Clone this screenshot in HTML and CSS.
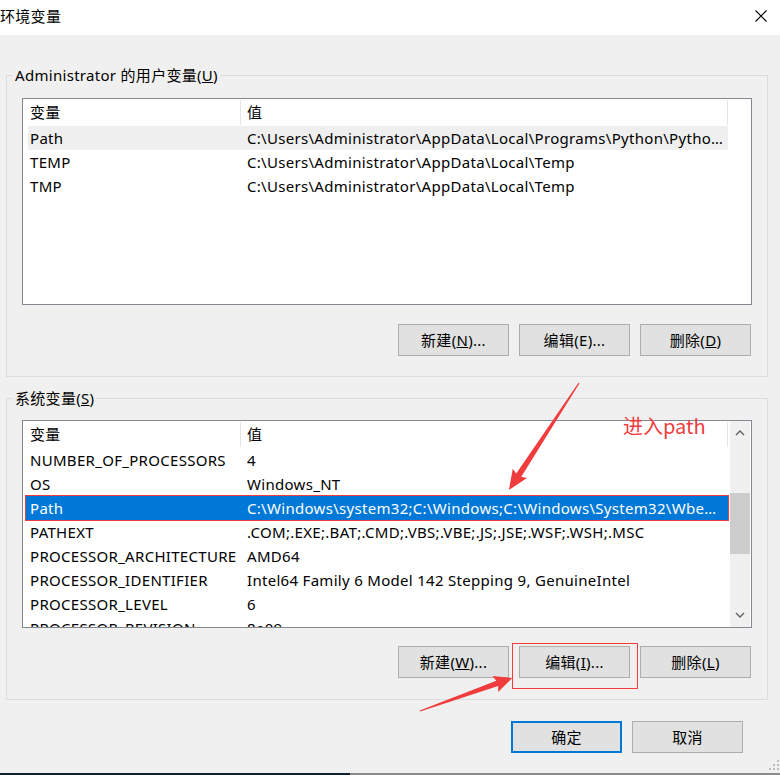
FILE: index.html
```html
<!DOCTYPE html>
<html lang="zh-CN">
<head>
<meta charset="utf-8">
<title>环境变量</title>
<link rel="stylesheet" href="styles.css">
</head>
<body>
<div class="window">
  <div class="titlebar">
    <span class="title">环境变量</span>
    <svg class="close" viewBox="0 0 12 12" width="12" height="12"><path d="M0.5 0.5 L11.5 11.5 M11.5 0.5 L0.5 11.5" stroke="#000" stroke-width="1.1" fill="none"/></svg>
  </div>
  <div class="client">
    <fieldset class="group group-user">
      <legend>Administrator 的用户变量(<u>U</u>)</legend>
      <div class="list">
        <div class="list-main">
          <div class="lhead"><div class="hc hc1">变量</div><div class="hc hc2">值</div></div>
          <div class="row hover"><span class="c1">Path</span><span class="c2">C:\Users\Administrator\AppData\Local\Programs\Python\Python38\Scripts\;C:\Users</span></div>
          <div class="row"><span class="c1">TEMP</span><span class="c2">C:\Users\Administrator\AppData\Local\Temp</span></div>
          <div class="row"><span class="c1">TMP</span><span class="c2">C:\Users\Administrator\AppData\Local\Temp</span></div>
        </div>
      </div>
      <div class="btnrow">
        <button class="btn">新建(<u>N</u>)...</button>
        <button class="btn">编辑(E)...</button>
        <button class="btn">删除(<u>D</u>)</button>
      </div>
    </fieldset>

    <fieldset class="group group-sys">
      <legend>系统变量(<u>S</u>)</legend>
      <div class="list">
        <div class="list-main">
          <div class="lhead"><div class="hc hc1">变量</div><div class="hc hc2">值</div></div>
          <div class="row"><span class="c1">NUMBER_OF_PROCESSORS</span><span class="c2">4</span></div>
          <div class="row"><span class="c1">OS</span><span class="c2">Windows_NT</span></div>
          <div class="row selected"><span class="c1">Path</span><span class="c2">C:\Windows\system32;C:\Windows;C:\Windows\System32\Wbem;C:\Windows\System32</span></div>
          <div class="row"><span class="c1">PATHEXT</span><span class="c2">.COM;.EXE;.BAT;.CMD;.VBS;.VBE;.JS;.JSE;.WSF;.WSH;.MSC</span></div>
          <div class="row"><span class="c1">PROCESSOR_ARCHITECTURE</span><span class="c2">AMD64</span></div>
          <div class="row"><span class="c1">PROCESSOR_IDENTIFIER</span><span class="c2">Intel64 Family 6 Model 142 Stepping 9, GenuineIntel</span></div>
          <div class="row"><span class="c1">PROCESSOR_LEVEL</span><span class="c2">6</span></div>
          <div class="row"><span class="c1">PROCESSOR_REVISION</span><span class="c2">8e09</span></div>
        </div>
        <div class="vscroll">
          <div class="sb-btn"><svg viewBox="0 0 10 6" width="10" height="6"><path d="M1 5 L5 1 L9 5" stroke="#606060" stroke-width="1.4" fill="none"/></svg></div>
          <div class="sb-track"><div class="sb-thumb"></div></div>
          <div class="sb-btn"><svg viewBox="0 0 10 6" width="10" height="6"><path d="M1 1 L5 5 L9 1" stroke="#606060" stroke-width="1.4" fill="none"/></svg></div>
        </div>
      </div>
      <div class="btnrow">
        <button class="btn">新建(<u>W</u>)...</button>
        <button class="btn">编辑(<u>I</u>)...</button>
        <button class="btn">删除(<u>L</u>)</button>
      </div>
    </fieldset>

    <div class="dlgbtns">
      <button class="btn btn-default">确定</button>
      <button class="btn">取消</button>
    </div>
  </div>
  <div class="taskbar"><div class="tb-dark"></div><div class="tb-gray"></div></div>

  <svg class="grip" viewBox="0 0 12 12" width="12" height="12">
    <rect x="9" y="1" width="2" height="2" fill="#bdbdbd"/>
    <rect x="5" y="5" width="2" height="2" fill="#bdbdbd"/>
    <rect x="9" y="5" width="2" height="2" fill="#bdbdbd"/>
    <rect x="1" y="9" width="2" height="2" fill="#bdbdbd"/>
    <rect x="5" y="9" width="2" height="2" fill="#bdbdbd"/>
    <rect x="9" y="9" width="2" height="2" fill="#bdbdbd"/>
  </svg>

  <svg class="annot" viewBox="0 0 780 775" width="780" height="775">
    <g transform="translate(579 383) rotate(123.2)">
      <polygon points="0,-0.6 110,-3 108,-8.5 128,0 108,8.5 110,3 0,0.6" fill="#f03c3c"/>
    </g>
    <g transform="translate(420 711) rotate(-19.7)">
      <polygon points="0,-0.6 82,-2.8 80,-8.5 98,0 80,8.5 82,2.8 0,0.6" fill="#f03c3c"/>
    </g>
    <rect x="512.5" y="643.5" width="125" height="45" fill="none" stroke="#f03c3c" stroke-width="1"/>
  </svg>
  <span class="annot-text">进入path</span>
</div>
</body>
</html>
```

FILE: styles.css
```css
* { box-sizing: border-box; }
html, body { margin: 0; padding: 0; }
body {
  width: 780px;
  height: 775px;
  overflow: hidden;
  background: #f0f0f0;
  font-family: "Noto Sans", "Noto Sans CJK SC", sans-serif;
  font-size: 15px;
  letter-spacing: 0.3px;
  color: #000;
}
.window {
  position: relative;
  width: 780px;
  height: 775px;
  display: flex;
  flex-direction: column;
}
.titlebar {
  height: 35px;
  flex: none;
  background: #fff;
  display: flex;
  align-items: center;
  justify-content: space-between;
  padding: 0 13px 3px 0;
}
.title { line-height: 20px; }
.close { display: block; }

.client {
  flex: 1;
  background: #f0f0f0;
  padding: 30px 0 0 6px;
  display: flex;
  flex-direction: column;
  align-items: flex-start;
}
.group {
  width: 762px;
  margin: 0;
  padding: 13px 15px 20px;
  border: 1px solid #dcdcdc;
  min-width: 0;
}
.group legend {
  margin-left: -9px;
  padding: 0 2px;
  line-height: 20px;
}
.group-sys {
  margin-top: 11px;
  padding-top: 12px;
  padding-bottom: 21px;
}
.list {
  width: 730px;
  height: 207px;
  border: 1px solid #828790;
  background: #fff;
  overflow: hidden;
  display: flex;
}
.group-sys .list { height: 208px; }
.list-main {
  width: 706px;
  flex: none;
}
.lhead {
  display: flex;
  height: 27px;
  align-items: center;
}
.hc {
  height: 25px;
  line-height: 25px;
  border-right: 1px solid #e5e5e5;
  white-space: nowrap;
}
.hc1 { width: 218px; padding-left: 7px; }
.hc2 { width: 487px; padding-left: 6px; }

.row {
  display: grid;
  grid-template-columns: 219px 481px;
  width: 700px;
  height: 24px;
  margin-left: 5px;
  line-height: 24px;
  white-space: nowrap;
}
.row .c1 { padding-left: 2px; overflow: hidden; }
.row .c2 { overflow: hidden; text-overflow: ellipsis; padding-right: 5px; }
.row.hover { background: #efefef; }
.row.selected {
  background: #0078d7;
  color: #fff;
  margin-left: 3px;
  width: 702px;
  grid-template-columns: 221px 481px;
  outline: 1px solid #f03c3c;
}
.row.selected .c1 { padding-left: 4px; }

.vscroll {
  width: 20px;
  margin-left: 1px;
  flex: none;
  background: #f0f0f0;
  display: flex;
  flex-direction: column;
}
.sb-btn {
  height: 24px;
  display: flex;
  align-items: center;
  justify-content: center;
}
.sb-btn svg { display: block; }
.sb-track { flex: 1; }
.sb-thumb {
  margin-top: 48px;
  height: 61px;
  background: #cdcdcd;
}

.btnrow {
  display: flex;
  justify-content: flex-end;
  gap: 10px;
  margin-top: 19px;
  padding-right: 1px;
}
.group-sys .btnrow { margin-top: 18px; }
.btn {
  width: 111px;
  height: 32px;
  padding: 0;
  margin: 0;
  background: #e1e1e1;
  border: 1px solid #adadad;
  font: inherit;
  letter-spacing: inherit;
  color: #000;
  line-height: 20px;
}
.btn-default { border: 2px solid #0078d7; }
.dlgbtns {
  align-self: stretch;
  display: flex;
  justify-content: flex-end;
  gap: 10px;
  margin-top: 21px;
  padding-right: 37px;
}

.taskbar {
  height: 2px;
  flex: none;
  display: flex;
}
.tb-dark { width: 350px; background: #0e1f2e; }
.tb-gray { flex: 1; background: #8c8c8c; }

.grip {
  position: absolute;
  right: 0;
  bottom: 4px;
}
.annot {
  position: absolute;
  left: 0;
  top: 0;
  pointer-events: none;
}
.annot-text {
  position: absolute;
  left: 623px;
  top: 413px;
  font-family: "Noto Sans CJK SC", "Noto Sans", sans-serif;
  font-size: 20px;
  line-height: 26px;
  letter-spacing: 0;
  color: #f03c3c;
}
```
